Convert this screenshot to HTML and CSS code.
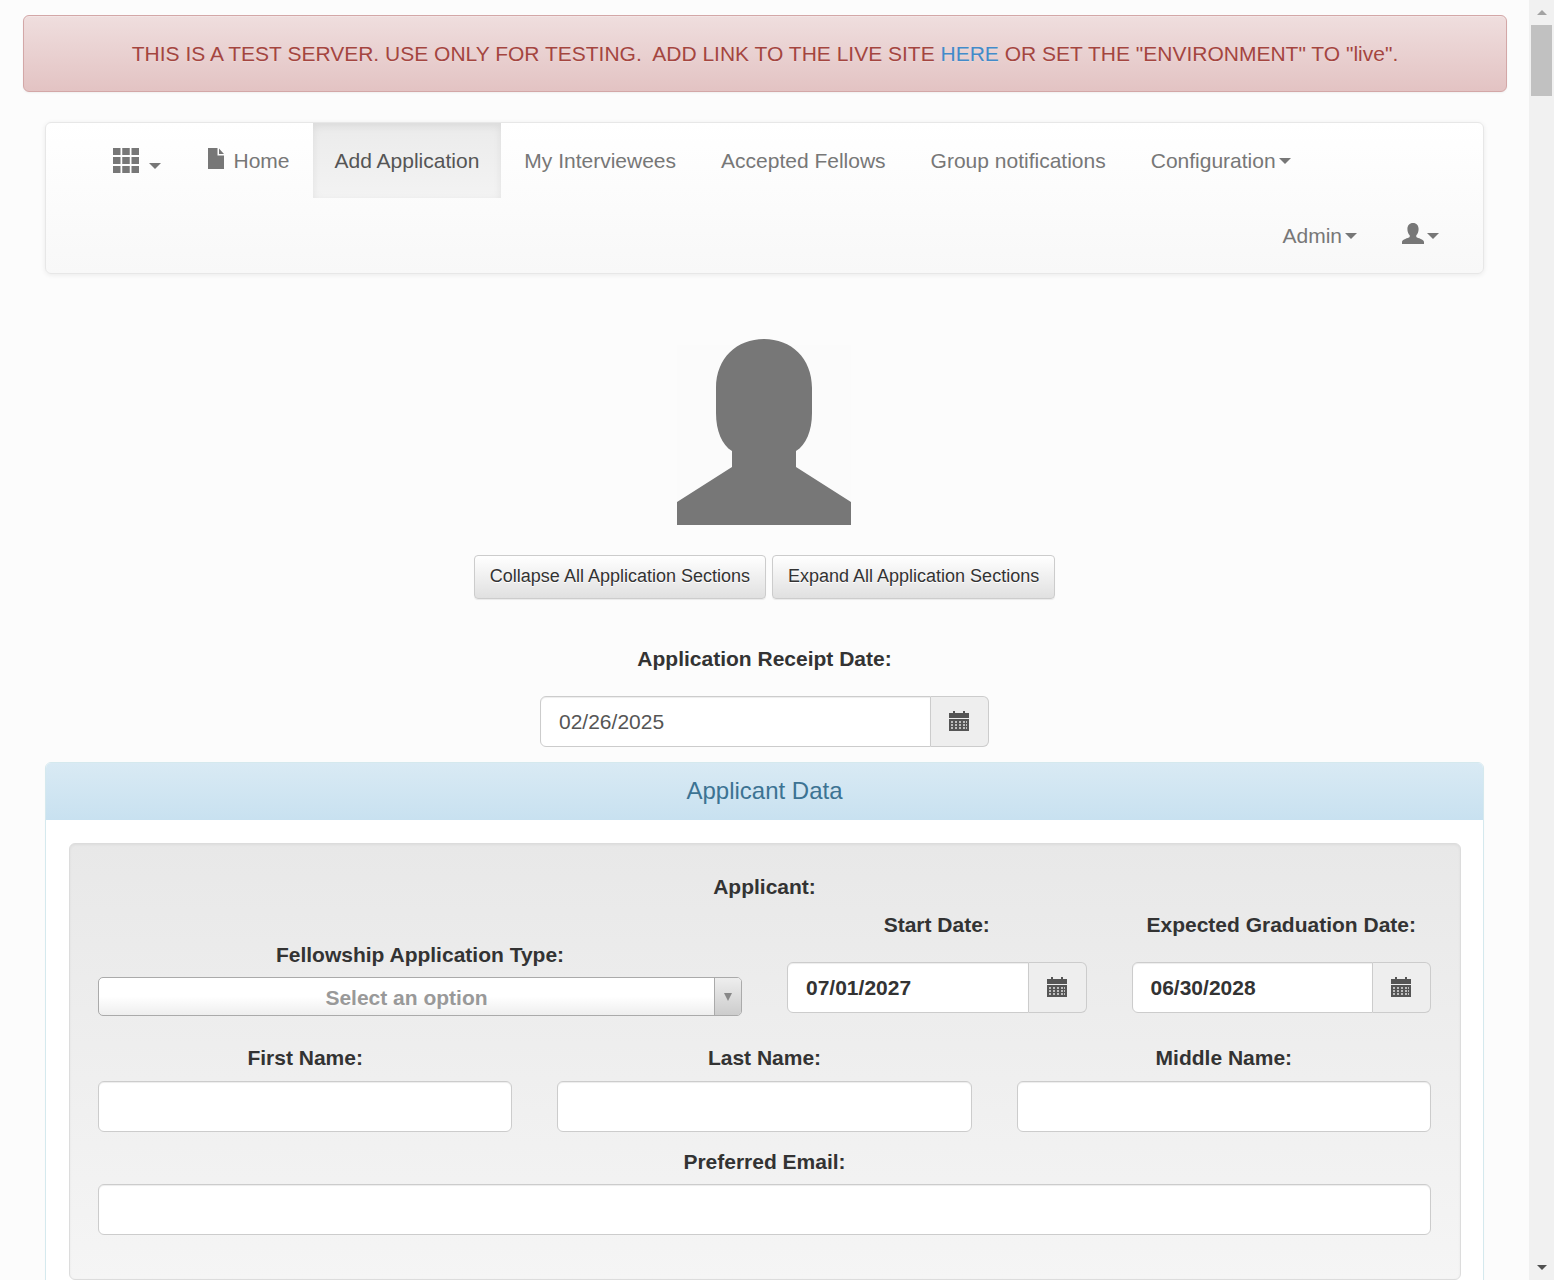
FILE: index.html
```html
<!DOCTYPE html>
<html>
<head lang="en">
    <meta charset="UTF-8">
    <title>Add Application</title>
    <link rel="stylesheet" href="styles.css">
</head>
<body>
<svg class="defs" width="0" height="0">
    <symbol id="cal" viewBox="0 0 20 20">
        <path fill="#555" d="M4 0h2v2h8V0h2v2h4v5H0V2h4zM0 8h20v12H0z"/>
        <path fill="#bdbdbd" d="M2 10h2v2H2zm4 0h2v2H6zm4 0h2v2h-2zm4 0h2v2h-2zm3 0h1v2h-1zM2 13h2v2H2zm4 0h2v2H6zm4 0h2v2h-2zm4 0h2v2h-2zm3 0h1v2h-1zM2 16h2v2H2zm4 0h2v2H6zm4 0h2v2h-2zm4 0h2v2h-2zm3 0h1v2h-1z"/>
    </symbol>
</svg>
<div class="page">
    <div class="content">
        <div class="alert">THIS IS A TEST SERVER. USE ONLY FOR TESTING.&nbsp; ADD LINK TO THE LIVE SITE <a href="#">HERE</a> OR SET THE "ENVIRONMENT" TO "live".</div>

        <div class="main">
            <nav class="navbar">
                <ul class="nav">
                    <li class="nav-apps">
                        <svg class="ico-apps" viewBox="0 0 26 25"><path fill="#777" d="M0 0h7.500v7H0zm9.250 0h7.500v7h-7.500zm9.250 0H26v7h-7.500zM0 9h7.500v7H0zm9.250 0h7.500v7h-7.500zm9.250 0H26v7h-7.500zM0 18h7.500v7H0zm9.250 0h7.500v7h-7.500zm9.250 0H26v7h-7.500z"/></svg>
                        <span class="caret caret-apps"></span>
                    </li>
                    <li><svg class="ico-file" viewBox="0 0 16 21"><path fill="#777" d="M0 0h9.500v7.500H16V21H0zM11 0.500l5 5.500h-5z"/></svg>Home</li>
                    <li class="active">Add Application</li>
                    <li>My Interviewees</li>
                    <li>Accepted Fellows</li>
                    <li>Group notifications</li>
                    <li>Configuration<span class="caret"></span></li>
                </ul>
                <ul class="nav nav-right">
                    <li>Admin<span class="caret"></span></li>
                    <li><svg class="ico-user" viewBox="0 0 22 21"><path fill="#777" d="M11 0c3.600 0 5.600 2.600 5.600 6 0 2.700-1 5-2.300 6.300v1.700c1.500 1.200 7.700 2.200 7.700 5V21H0v-2c0-2.800 6.200-3.800 7.700-5v-1.700C6.400 11 5.400 8.700 5.400 6 5.400 2.600 7.400 0 11 0z"/></svg><span class="caret"></span></li>
                </ul>
            </nav>

            <div class="photo">
                <svg viewBox="0 0 174 187" width="174" height="187">
                    <rect y="7" width="174" height="180" fill="#fbfbfb"/>
                    <path fill="#777" d="M39 50C39 20 60 1 87 1s48 19 48 49v25c0 18-6 32-16 38v16l55 35v23H0v-23l55-35v-16c-10-6-16-20-16-38z"/>
                </svg>
            </div>

            <div class="actions">
                <button class="btn">Collapse All Application Sections</button>
                <button class="btn">Expand All Application Sections</button>
            </div>

            <label class="field-label receipt-label">Application Receipt Date:</label>
            <div class="date-group receipt-date">
                <div class="date-input">02/26/2025</div>
                <span class="date-addon"><svg class="ico-cal"><use href="#cal"/></svg></span>
            </div>

            <section class="panel">
                <h3 class="panel-heading">Applicant Data</h3>
                <div class="panel-body">
                    <div class="well">
                        <label class="field-label applicant-label">Applicant:</label>
                        <div class="top-row">
                            <div class="col-type">
                                <label class="field-label type-label">Fellowship Application Type:</label>
                                <div class="select">
                                    <span class="select-text">Select an option</span>
                                    <span class="select-arrow"></span>
                                </div>
                            </div>
                            <div class="col-date">
                                <label class="field-label date-label">Start Date:</label>
                                <div class="date-group">
                                    <div class="date-input date-bold">07/01/2027</div>
                                    <span class="date-addon"><svg class="ico-cal"><use href="#cal"/></svg></span>
                                </div>
                            </div>
                            <div class="col-date">
                                <label class="field-label date-label">Expected Graduation Date:</label>
                                <div class="date-group">
                                    <div class="date-input date-bold">06/30/2028</div>
                                    <span class="date-addon"><svg class="ico-cal"><use href="#cal"/></svg></span>
                                </div>
                            </div>
                        </div>
                        <div class="name-row">
                            <div>
                                <label class="field-label name-label">First Name:</label>
                                <div class="input"></div>
                            </div>
                            <div>
                                <label class="field-label name-label">Last Name:</label>
                                <div class="input"></div>
                            </div>
                            <div>
                                <label class="field-label name-label">Middle Name:</label>
                                <div class="input"></div>
                            </div>
                        </div>
                        <label class="field-label email-label">Preferred Email:</label>
                        <div class="input"></div>
                    </div>
                </div>
            </section>
        </div>
    </div>

    <div class="scrollbar">
        <span class="scroll-up"></span>
        <span class="scroll-thumb"></span>
        <span class="scroll-down"></span>
    </div>
</div>
</body>
</html>
```

FILE: styles.css
```css
html, body {
    height: 100%;
    margin: 0;
    overflow: hidden;
}

body {
    background: #fcfcfc;
    color: #333;
    font-family: "Liberation Sans", Arial, sans-serif;
    font-size: 21px;
    line-height: 28px;
}

ul {
    margin: 0;
    padding: 0;
    list-style: none;
}

.defs {
    display: block;
    height: 0;
}

.page {
    display: flex;
    height: 1280px;
}

.content {
    flex: 1;
    min-width: 0;
    padding: 15px 22px 0 23px;
}

.scrollbar {
    display: flex;
    flex-direction: column;
    align-items: center;
    width: 25px;
    background: #f1f1f1;
}

.scroll-up {
    margin-top: 10px;
    border-left: 5px solid transparent;
    border-right: 5px solid transparent;
    border-bottom: 5px solid #a3a3a3;
}

.scroll-thumb {
    width: 21px;
    height: 71px;
    margin-top: 10px;
    background: #c1c1c1;
}

.scroll-down {
    margin-top: auto;
    margin-bottom: 10px;
    border-left: 5px solid transparent;
    border-right: 5px solid transparent;
    border-top: 5px solid #505050;
}

.alert {
    padding: 24px 15px 23px;
    border: 1px solid #d3a7a7;
    border-radius: 6px;
    background: linear-gradient(to bottom, #efdede, #e3c3c3);
    color: #a4453f;
    text-align: center;
    text-shadow: 0 1px 0 rgba(255, 255, 255, .2);
    box-shadow: inset 0 1px 0 rgba(255, 255, 255, .25), 0 1px 2px rgba(0, 0, 0, .05);
}

.alert a {
    color: #428bca;
    text-decoration: none;
}

.main {
    padding: 30px 23px 0 22px;
}

.navbar {
    height: 150px;
    border: 1px solid #e7e7e7;
    border-radius: 6px;
    background: linear-gradient(to bottom, #fff, #f8f8f8);
    box-shadow: inset 0 1px 0 rgba(255, 255, 255, .15), 0 1px 5px rgba(0, 0, 0, .075);
}

.nav {
    display: flex;
    padding-left: 45px;
    gap: 1px;
}

.nav-right {
    justify-content: flex-end;
    padding-left: 0;
    padding-right: 22px;
}

.nav li {
    display: flex;
    align-items: center;
    height: 75px;
    padding: 0 22px;
    color: #777;
    white-space: nowrap;
}

.nav li.active {
    background: linear-gradient(to bottom, #ebebeb, #f3f3f3);
    box-shadow: inset 0 3px 9px rgba(0, 0, 0, .075);
    color: #555;
}

.caret {
    width: 0;
    height: 0;
    margin-left: 3px;
    border-left: 6px solid transparent;
    border-right: 6px solid transparent;
    border-top: 6px solid #777;
}

.caret-apps {
    margin: 10px 0 0 10px;
}

.ico-apps {
    width: 26px;
    height: 25px;
    margin-top: -1px;
}

.ico-file {
    width: 16px;
    height: 21px;
    margin: -5px 9.500px 0 2px;
}

.ico-user {
    width: 22px;
    height: 21px;
    margin: -5px 0 0 0;
}

.photo {
    display: flex;
    justify-content: center;
    margin-top: 64px;
}

.photo svg {
    display: block;
    margin-right: 1px;
}

.actions {
    display: flex;
    justify-content: center;
    gap: 6px;
    margin-top: 30px;
}

.btn {
    height: 44px;
    padding: 0 15px 2px;
    border: 1px solid #ccc;
    border-radius: 4px;
    background: linear-gradient(to bottom, #fff, #e0e0e0);
    box-shadow: inset 0 1px 0 rgba(255, 255, 255, .15), 0 1px 1px rgba(0, 0, 0, .075);
    color: #333;
    font-family: inherit;
    font-size: 18px;
    text-shadow: 0 1px 0 #fff;
}

.field-label {
    display: block;
    font-weight: bold;
    text-align: center;
}

.receipt-label {
    margin: 46px 0 23px;
}

.date-group {
    display: flex;
    height: 51px;
}

.receipt-date {
    width: 449px;
    margin: 0 auto;
}

.date-input {
    flex: 1;
    padding: 0 18px;
    border: 1px solid #ccc;
    border-radius: 6px 0 0 6px;
    background: #fff;
    box-shadow: inset 0 1px 1px rgba(0, 0, 0, .075);
    color: #555;
    line-height: 50px;
}

.date-bold {
    color: #333;
    font-weight: bold;
}

.date-addon {
    display: flex;
    align-items: center;
    justify-content: center;
    width: 57px;
    border: 1px solid #ccc;
    border-left: 0;
    border-radius: 0 6px 6px 0;
    background: #eee;
}

.ico-cal {
    width: 20px;
    height: 20px;
    margin: -2px 0 0 -1px;
}

.panel {
    margin-top: 15px;
    border: 1px solid #d5e9ee;
    border-radius: 6px;
    background: #fff;
    box-shadow: 0 1px 1px rgba(0, 0, 0, .05);
}

.panel-heading {
    margin: 0;
    height: 57px;
    border-radius: 5px 5px 0 0;
    background: linear-gradient(to bottom, #d9eaf4, #c8e1f0);
    color: #3c7393;
    font-size: 24px;
    font-weight: normal;
    line-height: 56px;
    text-align: center;
}

.panel-body {
    padding: 23px 22px 60px 23px;
}

.well {
    padding: 29px 29px 44px 28px;
    border: 1px solid #dcdcdc;
    border-radius: 6px;
    background: linear-gradient(to bottom, #e8e8e8, #f5f5f5);
    box-shadow: inset 0 1px 3px rgba(0, 0, 0, .05), 0 1px 0 rgba(255, 255, 255, .1);
}

.top-row {
    display: flex;
    align-items: flex-end;
    gap: 45px;
    margin-top: 10px;
}

.col-type {
    width: 644px;
}

.col-date {
    flex: 1;
    padding-bottom: 3px;
}

.type-label {
    margin-bottom: 8px;
}

.date-label {
    margin-bottom: 23px;
}

.select {
    display: flex;
    height: 37px;
    border: 1px solid #aaa;
    border-radius: 5px;
    background: linear-gradient(to bottom, #fff 50%, #eee);
}

.select-text {
    flex: 1;
    color: #999;
    font-weight: bold;
    line-height: 40px;
    text-align: center;
}

.select-arrow {
    position: relative;
    width: 26px;
    border-left: 1px solid #aaa;
    border-radius: 0 4px 4px 0;
    background: linear-gradient(to bottom, #eee, #ccc);
}

.select-arrow::after {
    content: "";
    position: absolute;
    top: 15px;
    left: 9px;
    border-left: 4px solid transparent;
    border-right: 4px solid transparent;
    border-top: 8px solid #888;
}

.name-row {
    display: grid;
    grid-template-columns: repeat(3, 1fr);
    gap: 45px;
    margin-top: 28px;
}

.name-label {
    margin-bottom: 9px;
}

.email-label {
    margin: 16px 0 8px;
}

.input {
    height: 51px;
    box-sizing: border-box;
    border: 1px solid #ccc;
    border-radius: 6px;
    background: #fff;
    box-shadow: inset 0 1px 1px rgba(0, 0, 0, .075);
}
```
